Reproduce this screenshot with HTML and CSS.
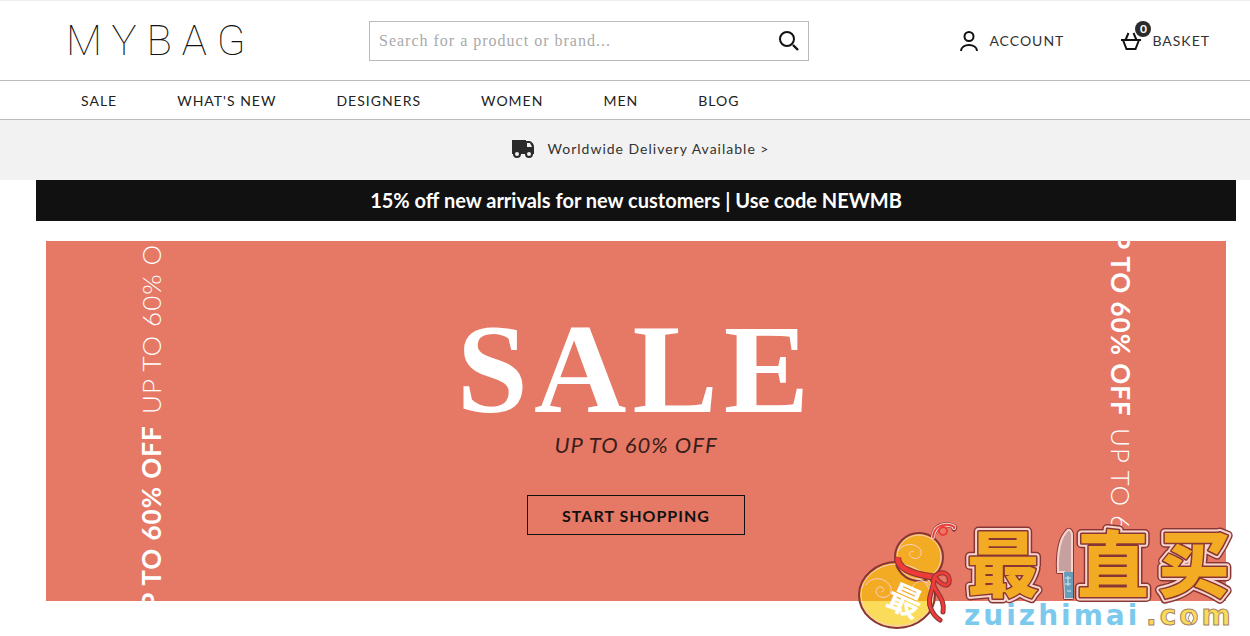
FILE: index.html
```
<!DOCTYPE html>
<html lang="en">
<head>
  <meta charset="UTF-8">
  <title>MYBAG</title>
  <meta name="viewport" content="width=device-width, initial-scale=1.0">
  <link rel="stylesheet" href="styles.css">
</head>
<body>
  <header class="header">
    <a class="logo" href="#">MYBAG</a>
    <form class="search">
      <input class="search-input" type="text" aria-label="Search" placeholder="Search for a product or brand...">
      <button class="search-button" type="submit" aria-label="Search">
        <svg width="22" height="22" viewBox="0 0 22 22" fill="none" stroke="#111" stroke-width="2">
          <circle cx="9" cy="9" r="7"/>
          <path d="M15 15l5 5" stroke-width="2.4"/>
        </svg>
      </button>
    </form>
    <div class="user-links">
      <a class="user-link" href="#">
        <svg width="20" height="22" viewBox="0 0 20 22" fill="none" stroke="#111" stroke-width="2">
          <circle cx="10" cy="6.500" r="4.500"/>
          <path d="M2 21c0-8 16-8 16 0"/>
        </svg>
        ACCOUNT
      </a>
      <a class="user-link basket" href="#">
        <svg width="22" height="22" viewBox="0 0 22 22" fill="none" stroke="#111" stroke-width="2">
          <path d="M1 10h20M3 10l3.500 9h9l3.500-9M5.500 10l3-7M16.500 10l-3-7"/>
        </svg>
        <span class="badge">0</span>
        BASKET
      </a>
    </div>
  </header>

  <nav class="nav">
    <a href="#">SALE</a>
    <a href="#">WHAT'S NEW</a>
    <a href="#">DESIGNERS</a>
    <a href="#">WOMEN</a>
    <a href="#">MEN</a>
    <a href="#">BLOG</a>
  </nav>

  <div class="delivery">
    <a href="#">
      <svg width="24" height="20" viewBox="0 0 24 20">
        <path fill="#2b2b2b" d="M1 2h14v1h4q4 2 4 6v7H1z"/>
        <path fill="#f2f2f2" d="M16 5h3l2 4h-5z"/>
        <circle cx="6" cy="16" r="3" fill="#f2f2f2" stroke="#2b2b2b" stroke-width="2"/>
        <circle cx="18" cy="16" r="3" fill="#f2f2f2" stroke="#2b2b2b" stroke-width="2"/>
      </svg>
      <span>Worldwide Delivery Available &gt;</span>
    </a>
  </div>

  <main class="main">
    <p class="promo">15% off new arrivals for new customers | Use code NEWMB</p>
    <section class="banner">
      <div class="strip strip-left"><b>UP TO 60% OFF</b><span>UP TO 60% OFF</span></div>
      <div class="banner-text">
        <h1>SALE</h1>
        <p>UP TO 60% OFF</p>
        <button class="shop-button" type="button">START SHOPPING</button>
      </div>
      <div class="strip"><b>UP TO 60% OFF</b><span>UP TO 60% OFF</span></div>
    </section>
  </main>

  <svg class="stamp" width="390" height="116" viewBox="0 0 390 116">
    <defs>
      <linearGradient id="gold" gradientUnits="userSpaceOnUse" x1="0" y1="0" x2="0" y2="116">
        <stop offset="0.698" stop-color="#f4ab24"/>
        <stop offset="0.698" stop-color="#fbdb5a"/>
      </linearGradient>
      <g id="name" class="stamp-name">
        <text x="148" y="71">最</text>
        <text x="258" y="71">直</text>
        <text x="339" y="71">买</text>
      </g>
    </defs>

    <!-- gourd -->
    <g stroke="#883536" stroke-width="2" fill="url(#gold)">
      <path d="M78 17c1-9 7-13 16-12 5 1 7 2 5 4" fill="none" stroke-width="5" stroke-linecap="round"/>
      <ellipse cx="42" cy="75" rx="38" ry="33"/>
      <circle cx="64" cy="37" r="24"/>
    </g>
    <g fill="none" stroke="#f8cfc5" stroke-width="1">
      <ellipse cx="42" cy="75" rx="36" ry="31"/>
      <circle cx="64" cy="37" r="22"/>
      <path d="M43 31c3-6 14-9 20-4 7 5 1 14-5 11-6-2-3-9 1-6"/>
      <path d="M11 65c5-9 19-8 24 1 4 7-3 13-9 11-7-2-6-11 0-10 4 1 3 5 0 5"/>
      <path d="M76 67c-6-10-18-6-19 2 0 6 8 8 9 2M61 59c8 0 12 6 14 13"/>
    </g>
    <path d="M43 37c-2 10 12 17 36 20" fill="none" stroke="#883536" stroke-width="7"/>
    <path d="M43 37c-2 10 12 17 36 20" fill="none" stroke="#ed3b37" stroke-width="5"/>
    <g fill="none" stroke-linecap="round">
      <g stroke="#883536" stroke-width="5">
        <path d="M79 57c9-9 17-2 15 6-3 5-10 0-14-6M79 58c-4 13 12 17 9 34M79 58c0 12-8 20-3 31 3 7 6 9 9 11"/>
      </g>
      <g stroke="#ed3b37" stroke-width="3">
        <path d="M79 57c9-9 17-2 15 6-3 5-10 0-14-6M79 58c-4 13 12 17 9 34M79 58c0 12-8 20-3 31 3 7 6 9 9 11"/>
      </g>
      <path d="M78 17c1-9 7-13 16-12 5 1 6 2 5 3" stroke="#f8d5cc" stroke-width="4"/>
      <path d="M78 17c1-9 7-13 16-12 5 1 6 2 5 3" stroke="#ed3b37" stroke-width="2"/>
      <circle cx="88" cy="11" r="4" stroke="#ed3b37" stroke-width="2"/>
    </g>
    <text class="stamp-seal" x="50" y="93" transform="rotate(24 50 81)">最</text>

    <!-- name, outlined three times -->
    <use href="#name" fill="none" stroke="#883536" stroke-width="10"/>
    <use href="#name" fill="none" stroke="#f8d5cc" stroke-width="7"/>
    <use href="#name" fill="#f4ab24" stroke="#883536" stroke-width="3" class="stamp-face"/>

    <!-- knife -->
    <path d="M213 10c-7 6-11 21-10 42h6l1 26h7V15c0-3-2-6-4-5z" fill="#f8d5cc" stroke="#883536" stroke-width="4" stroke-linejoin="round"/>
    <path d="M213 10c-7 6-11 21-10 42h6l1 26h7V15c0-3-2-6-4-5z" fill="#c7a19f" stroke="#f8d5cc" stroke-width="2"/>
    <path d="M209 52h9v26h-8z" fill="#669dba"/>
    <path d="M210 58h6M210 64h6M213 56v10M212 71h4" stroke="#d5e8ee" stroke-width="1"/>

    <text class="stamp-url" x="109" y="105" fill="#7bcaee">zuizhimai</text>
    <text class="stamp-url stamp-com" x="291" y="105" fill="#fbdb5a">.com</text>
    <path d="M336 92l3 6-3 6-3-6z" fill="#fff" stroke="#a78468"/>
  </svg>
</body>
</html>
```
FILE: styles.css
```
* {
  box-sizing: border-box;
}
body {
  margin: 0;
  background-color: #fff;
  color: #333;
  font-family: Lato, "Liberation Sans", sans-serif;
  font-size: 14px;
  font-weight: 400;
  letter-spacing: 1px;
}
a {
  color: inherit;
  text-decoration: none;
}
.header {
  display: flex;
  align-items: center;
  height: 81px;
  padding: 0 40px 0 66px;
  border-top: 1px solid #eee;
  border-bottom: 1px solid #bbb;
}
.logo {
  flex: 0 0 303px;
  color: #111;
  font-family: Roboto, sans-serif;
  font-size: 42px;
  font-weight: 100;
  letter-spacing: 10px;
}
.search {
  display: flex;
  flex: 0 1 440px;
  height: 40px;
  border: 1px solid #bbb;
}
.search-input {
  flex: 1;
  min-width: 0;
  padding: 0 9px;
  border: 0;
  background: none;
  font-family: "Liberation Serif", serif;
  font-size: 16px;
  letter-spacing: 1px;
}
.search-input::placeholder {
  color: #aaa;
}
.search-button {
  display: flex;
  align-items: center;
  padding: 0 8px;
  border: 0;
  background: none;
  cursor: pointer;
}
.user-links {
  display: flex;
  gap: 56px;
  margin-left: auto;
}
.user-link {
  display: flex;
  align-items: center;
  gap: 10px;
}
.basket {
  position: relative;
}
.badge {
  position: absolute;
  top: -9px;
  left: 15px;
  width: 16px;
  border-radius: 8px;
  background-color: #2b2b2b;
  color: #fff;
  font-size: 12px;
  font-weight: 700;
  line-height: 16px;
  letter-spacing: 0;
  text-align: center;
}
.nav {
  display: flex;
  align-items: center;
  gap: 60px;
  height: 39px;
  padding: 0 81px;
  border-bottom: 1px solid #bbb;
}
.nav a {
  color: #222;
}
.delivery {
  display: flex;
  justify-content: center;
  height: 60px;
  padding: 0 14px 4px 44px;
  background-color: #f2f2f2;
}
.delivery a {
  display: flex;
  align-items: center;
  gap: 13px;
}
.main {
  padding: 0 14px 0 36px;
}
.promo {
  margin: 0;
  background-color: #111;
  color: #fff;
  font-size: 20px;
  font-weight: 700;
  line-height: 41px;
  letter-spacing: 0;
  text-align: center;
}
.banner {
  display: flex;
  justify-content: space-between;
  height: 360px;
  margin: 20px 10px 0;
  padding: 0 90px;
  background-color: #e57966;
}
.strip {
  display: flex;
  align-items: center;
  justify-content: center;
  gap: 11px;
  width: 30px;
  overflow: hidden;
  writing-mode: vertical-rl;
  color: #fff;
  font-size: 26px;
  line-height: 30px;
  white-space: nowrap;
}
.strip span, .strip b {
  flex: none;
}
.strip span {
  font-weight: 300;
}
.strip-left {
  transform: rotate(180deg);
}
.banner-text {
  display: flex;
  flex-direction: column;
  align-items: center;
  padding-top: 64px;
}
.banner-text h1 {
  margin: 0;
  color: #fff;
  font-family: "Liberation Serif", serif;
  font-size: 128px;
  font-weight: 700;
  line-height: 128px;
  letter-spacing: 6px;
}
.banner-text p {
  margin: 0 0 38px;
  color: #3a1d1a;
  font-size: 22px;
  font-style: italic;
  line-height: 24px;
}
.shop-button {
  width: 218px;
  height: 40px;
  border: 1px solid #111;
  background: none;
  color: #111;
  font-family: inherit;
  font-size: 16px;
  font-weight: 700;
  letter-spacing: 1px;
  cursor: pointer;
}
.stamp {
  position: absolute;
  right: 5px;
  top: 520px;
}
.stamp text {
  letter-spacing: 0;
}
.stamp-name {
  font-family: "Noto Sans CJK SC", sans-serif;
  font-size: 72px;
  font-weight: 900;
  text-anchor: middle;
  stroke-linejoin: round;
}
.stamp-face {
  paint-order: stroke;
}
.stamp-seal {
  fill: #fff;
  font-family: "Noto Sans CJK SC", sans-serif;
  font-size: 34px;
  font-weight: 700;
  text-anchor: middle;
}
.stamp .stamp-url {
  font-family: "DejaVu Sans", sans-serif;
  font-size: 28px;
  font-weight: 700;
  letter-spacing: 3px;
}
.stamp-com {
  stroke: #a78468;
  stroke-width: 1px;
}
```
